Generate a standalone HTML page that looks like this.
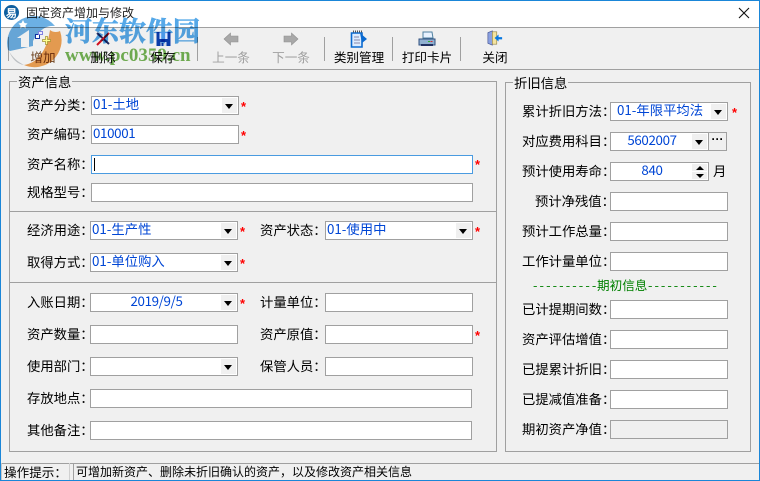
<!DOCTYPE html>
<html><head><meta charset="utf-8"><style>
html,body{margin:0;padding:0}
body{width:760px;height:481px;overflow:hidden;position:relative;background:#f0f0f0;font:13.33px/19px "WenQuanYi Zen Hei","Noto Sans CJK SC",sans-serif;color:#000}
div,span,svg{position:absolute;box-sizing:border-box;white-space:nowrap}
.l{height:19px;line-height:17px;font-size:13.33px}
.f{background:#fff;border:1px solid #a0a0a0;height:19px;color:#0046d5;font-size:13.33px;line-height:14px;padding-left:1px}
.n{letter-spacing:-.35px}
.b{position:absolute;right:1px;top:1px;bottom:1px;width:15px;background:#f0f0f0}
.b:after{content:"";position:absolute;left:3px;top:6px;border:4px solid transparent;border-top:5px solid #000;border-bottom:0}
.s{color:#f00;font:bold 13px/19px "Liberation Sans",sans-serif}
.t{top:48px;height:18px;line-height:18px;font-size:12.6px;text-align:center;width:68px}
.g{color:#a0a0a0}
.sep{top:37px;width:1px;height:24px;background:#a0a0a0}
.h{height:1px;background:#a0a0a0}
.gb{border:1px solid #a0a0a0}
.w{mix-blend-mode:multiply}
</style></head><body>
<div style="left:0;top:0;width:760px;height:27px;background:#fff"></div>
<div class="h" style="left:0;top:27px;width:760px"></div>
<div class="h" style="left:0;top:69px;width:760px"></div>

<svg style="left:3px;top:4px" width="20" height="19" viewBox="0 0 20 19"><circle cx="8.500" cy="8.500" r="7.500" fill="#0f5f9f"/><text x="8.500" y="13" font-size="11" font-weight="bold" text-anchor="middle" fill="#fff" font-family="WenQuanYi Zen Hei,sans-serif">易</text></svg>
<div style="left:26px;top:4px;height:18px;line-height:17px;font-size:12px;color:#222">固定资产增加与修改</div>
<svg style="left:738px;top:7px" width="12" height="12" viewBox="0 0 12 12"><path d="M1 1L11 11M11 1L1 11" stroke="#111" stroke-width="1.1" fill="none"/></svg>

<div class="sep" style="left:8px"></div><div class="sep" style="left:197px"></div><div class="sep" style="left:324px"></div><div class="sep" style="left:392px"></div><div class="sep" style="left:460px"></div>

<svg style="left:34px;top:30px;z-index:5" width="18" height="17" viewBox="0 0 18 17"><rect x="1.500" y="4.500" width="4" height="4" fill="#fff" stroke="#1030a0"/><rect x="4.500" y="1.500" width="4" height="3" fill="#eef" stroke="#8080e0"/><path d="M8.500 9.500h3v-3h2v3h3v2h-3v3h-2v-3h-3z" fill="#fffe90" stroke="#a09030" stroke-width=".7"/></svg>
<svg style="left:95px;top:32px" width="16" height="14" viewBox="0 0 16 14"><path d="M2 1L14 12" stroke="#222a60" stroke-width="2"/><path d="M14 1L2 13" stroke="#d01020" stroke-width="2"/></svg>
<svg style="left:155px;top:31px" width="17" height="16" viewBox="0 0 16 16"><path d="M1 1H15V15H1Z" fill="#0a3ca8"/><rect x="4" y="1" width="8" height="7" fill="#dfe8ff"/><rect x="5" y="11" width="6" height="4" fill="#d0d8e8"/><rect x="6" y="12" width="2" height="3" fill="#0a3ca8"/></svg>
<svg style="left:223px;top:32px" width="16" height="14" viewBox="0 0 16 14"><path d="M1 7L7.500 1V4H15V10H7.500V13Z" fill="#a8a8a8" stroke="#909090" stroke-width=".6"/></svg>
<svg style="left:283px;top:32px" width="16" height="14" viewBox="0 0 16 14"><path d="M15 7L8.500 1V4H1V10H8.500V13Z" fill="#a8a8a8" stroke="#909090" stroke-width=".6"/></svg>
<svg style="left:350px;top:30px" width="18" height="18" viewBox="0 0 18 18"><path d="M1.500 3H12V17H1.500Z" fill="#dcecff" stroke="#0a6ad0" stroke-width="1.600"/><path d="M3 1.500H12" stroke="#555" stroke-dasharray="1 1" stroke-width="2"/><path d="M10 3L17 9L12 13Z" fill="#0a6ad0"/><path d="M4 7H9M4 10H10M4 13H10" stroke="#88a" stroke-width="1"/></svg>
<svg style="left:418px;top:31px" width="18" height="16" viewBox="0 0 18 16"><path d="M5 1H14L15 7H5Z" fill="#e8f2ff" stroke="#5080a0"/><path d="M1 8H17V14H1Z" fill="#90b0d0" stroke="#305080"/><path d="M3 14H15" stroke="#203060" stroke-width="2"/><path d="M10 10.500h2" stroke="#30b030"/><path d="M12.500 10.500h2" stroke="#d03030"/></svg>
<svg style="left:486px;top:30px" width="18" height="16" viewBox="0 0 18 18"><path d="M1 3L6 1V17L1 15Z" fill="#8aa0e0" stroke="#405090" stroke-width=".7"/><path d="M6 2H11V16H6Z" fill="#f4e4a0" stroke="#908040" stroke-width=".7"/><path d="M17 8H13V5L8.500 9L13 13V10.500H17Z" fill="#0878e0"/></svg>

<div class="t" style="left:9px;color:#6e4320">增加</div><div class="t" style="left:69px">删除</div><div class="t" style="left:129px">保存</div><div class="t g" style="left:197px">上一条</div><div class="t g" style="left:257px">下一条</div><div class="t" style="left:325px">类别管理</div><div class="t" style="left:393px">打印卡片</div><div class="t" style="left:461px">关闭</div>

<div class="gb" style="left:9px;top:81px;width:488px;height:371px"></div>
<div class="h" style="left:9px;top:211px;width:488px"></div>
<div class="h" style="left:9px;top:282px;width:488px"></div>
<div class="l" style="left:17px;top:73px;background:#f0f0f0;padding:0 1px;height:17px">资产信息</div>

<div class="l" style="left:27px;top:96px">资产分类：</div><div class="f" style="left:91px;top:96px;width:148px">01-土地<span class="b"></span></div><span class="s" style="left:241px;top:97px">*</span>
<div class="l" style="left:27px;top:125px">资产编码：</div><div class="f n" style="left:91px;top:125px;width:148px">010001</div><span class="s" style="left:241px;top:126px">*</span>
<div class="l" style="left:27px;top:155px">资产名称：</div><div class="f" style="left:91px;top:155px;width:382px;border-color:#4a9be0"><span style="left:2px;top:2px;width:1px;height:13px;background:#000"></span></div><span class="s" style="left:475px;top:155px">*</span>
<div class="l" style="left:27px;top:183px">规格型号：</div><div class="f" style="left:91px;top:183px;width:382px"></div>

<div class="l" style="left:27px;top:221px">经济用途：</div><div class="f" style="left:90px;top:221px;width:148px">01-生产性<span class="b"></span></div><span class="s" style="left:240px;top:222px">*</span>
<div class="l" style="left:27px;top:253px">取得方式：</div><div class="f" style="left:90px;top:253px;width:148px">01-单位购入<span class="b"></span></div><span class="s" style="left:240px;top:254px">*</span>
<div class="l" style="left:260px;top:221px">资产状态：</div><div class="f" style="left:325px;top:221px;width:148px">01-使用中<span class="b"></span></div><span class="s" style="left:475px;top:222px">*</span>

<div class="l" style="left:27px;top:293px">入账日期：</div><div class="f n" style="left:90px;top:293px;width:148px;text-align:center;padding-right:16px">2019/9/5<span class="b"></span></div><span class="s" style="left:240px;top:294px">*</span>
<div class="l" style="left:260px;top:293px">计量单位：</div><div class="f" style="left:325px;top:293px;width:148px"></div>
<div class="l" style="left:27px;top:325px">资产数量：</div><div class="f" style="left:90px;top:325px;width:148px"></div>
<div class="l" style="left:260px;top:325px">资产原值：</div><div class="f" style="left:325px;top:325px;width:148px"></div><span class="s" style="left:475px;top:326px">*</span>
<div class="l" style="left:27px;top:357px">使用部门：</div><div class="f" style="left:90px;top:357px;width:148px"><span class="b"></span></div>
<div class="l" style="left:260px;top:357px">保管人员：</div><div class="f" style="left:325px;top:357px;width:148px"></div>
<div class="l" style="left:27px;top:389px">存放地点：</div><div class="f" style="left:90px;top:389px;width:382px"></div>
<div class="l" style="left:27px;top:421px">其他备注：</div><div class="f" style="left:90px;top:421px;width:382px"></div>

<div class="gb" style="left:505px;top:82px;width:246px;height:370px"></div>
<div class="l" style="left:513px;top:74px;background:#f0f0f0;padding:0 1px;height:17px">折旧信息</div>

<div class="l" style="left:522px;top:102px">累计折旧方法：</div><div class="f" style="left:610px;top:102px;width:118px;padding-left:6px">01-年限平均法<span class="b"></span></div><span class="s" style="left:732px;top:103px">*</span>
<div class="l" style="left:522px;top:132px">对应费用科目：</div><div class="f n" style="left:610px;top:132px;width:99px;text-align:center;padding-right:16px">5602007<span class="b"></span></div><div class="f" style="left:708px;top:132px;width:19px;background:#f0f0f0;color:#000;font:bold 12px/12px 'Liberation Sans',sans-serif;text-align:center;padding:0">···</div>
<div class="l" style="left:522px;top:162px">预计使用寿命：</div><div class="f n" style="left:610px;top:162px;width:99px;text-align:center;padding-right:16px">840
<span style="right:1px;top:1px;width:15px;height:7px;background:#f0f0f0"><span style="left:4px;top:2px;border:4px solid transparent;border-bottom:4px solid #000;border-top:0"></span></span>
<span style="right:1px;top:9px;width:15px;height:7px;background:#f0f0f0"><span style="left:4px;top:2px;border:4px solid transparent;border-top:4px solid #000;border-bottom:0"></span></span></div>
<div class="l" style="left:713px;top:162px">月</div>
<div class="l" style="left:535px;top:192px">预计净残值：</div><div class="f" style="left:610px;top:192px;width:118px"></div>
<div class="l" style="left:522px;top:222px">预计工作总量：</div><div class="f" style="left:610px;top:222px;width:118px"></div>
<div class="l" style="left:522px;top:252px">工作计量单位：</div><div class="f" style="left:610px;top:252px;width:118px"></div>
<div class="l" style="left:533px;top:276px;color:#008000;font-size:12.8px;letter-spacing:2.1px">----------</div>
<div class="l" style="left:597px;top:276px;color:#008000;font-size:12.6px">期初信息</div>
<div class="l" style="left:648px;top:276px;color:#008000;font-size:12.8px;letter-spacing:2px">-----------</div>
<div class="l" style="left:522px;top:300px">已计提期间数：</div><div class="f" style="left:610px;top:300px;width:118px"></div>
<div class="l" style="left:522px;top:330px">资产评估增值：</div><div class="f" style="left:610px;top:330px;width:118px"></div>
<div class="l" style="left:522px;top:360px">已提累计折旧：</div><div class="f" style="left:610px;top:360px;width:118px"></div>
<div class="l" style="left:522px;top:390px">已提减值准备：</div><div class="f" style="left:610px;top:390px;width:118px"></div>
<div class="l" style="left:522px;top:420px">期初资产净值：</div><div class="f" style="left:610px;top:420px;width:118px;background:#f0f0f0"></div>

<div class="h" style="left:0;top:463px;width:760px"></div>
<div style="left:1px;top:463px;width:69px;height:17px;border-left:1px solid #c8c8c8;border-right:1px solid #d0d0d0;font-size:12.6px;line-height:17px;padding-left:2px">操作提示：</div>
<div style="left:73px;top:463px;width:686px;height:17px;border-left:1px solid #a0a0a0;font-size:12px;line-height:17px;padding-left:2px">可增加新资产、删除未折旧确认的资产，以及修改资产相关信息</div>

<svg class="w" style="left:0;top:0" width="70" height="70" viewBox="0 0 70 70">
<path d="M8 50A27 27 0 0 1 55 26C45 25 38 32 33 41L33 46L10 51Z" fill="#6cb0e4"/>
<path d="M17 38L29 30V47H21V38Z" fill="#fff"/>
<path d="M23 20l1.500 3 3 .5-2 2 .5 3-3-1.500-3 1.500.5-3-2-2 3-.5z" fill="#fff"/>
<path d="M50 30C54 33 58 32 60 31A27 27 0 0 1 24 65C38 63 47 50 50 30Z" fill="#f2a455"/>
<path d="M9 51C12 57 18 62 24 65C17 64 12 59 9 51Z" fill="#c8ccd0"/>
</svg>
<div class="w" style="left:65px;top:11px;height:38px;font:bold 27px/38px 'Noto Serif CJK SC',serif;color:#55a8e8;-webkit-text-stroke:.6px #55a8e8">河东软件园</div>
<div class="w" style="left:65px;top:45px;height:22px;font:bold 19px/22px 'Liberation Serif',serif;color:#74b454">www.pc0359.cn</div>

<div style="left:0;top:0;width:760px;height:481px;border:1px solid #1a86d8"></div>
</body></html>
